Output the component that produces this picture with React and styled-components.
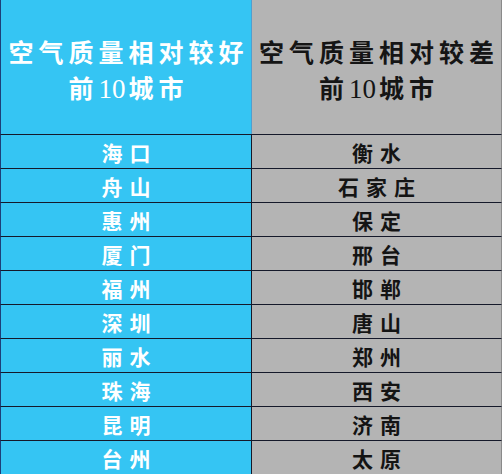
import { Fragment } from "react"
import styled, { createGlobalStyle } from "styled-components"

const GlobalStyle = createGlobalStyle`
  html, body {
    margin: 0;
    padding: 0;
    background: #ffffff;
  }
  body {
    font-family: "Noto Sans CJK SC", "Noto Sans", sans-serif;
  }
`

const Table = styled.div`
  width: 502px;
  height: 474px;
  display: grid;
  grid-template-columns: 251px 251px;
  grid-template-rows: 134px repeat(10, 34px);
  overflow: hidden;
`

const HeadCell = styled.div`
  display: flex;
  flex-direction: column;
  align-items: center;
  justify-content: center;
  padding-top: 6px;
  box-sizing: border-box;
  background-color: ${props => props.$good ? "#35c5f3" : "#b4b4b4"};
  color: ${props => props.$good ? "#ffffff" : "#151515"};
  border-left: ${props => props.$good ? "1px solid #1d3f78" : "1px solid #4f9fd0"};
  border-right: ${props => props.$good ? "none" : "1px solid #8a8a8a"};
`

const HeadLine = styled.div`
  font-size: 25px;
  font-weight: 700;
  line-height: 36px;
  letter-spacing: 5px;
  padding-left: 5px;
  white-space: nowrap;
`

const Num = styled.span`
  font-family: "Liberation Serif", "Times New Roman", serif;
  font-weight: 400;
  font-size: 27px;
  letter-spacing: 0;
  margin-right: 3px;
`

const Cell = styled.div`
  display: flex;
  align-items: center;
  justify-content: center;
  box-sizing: border-box;
  border-top: 1px solid #15192a;
  background-color: ${props => props.$good ? "#35c5f3" : "#b4b4b4"};
  color: ${props => props.$good ? "#ffffff" : "#141414"};
  border-left: ${props => props.$good ? "1px solid #1d3f78" : "1px solid #15192a"};
  border-right: ${props => props.$good ? "none" : "1px solid #8a8a8a"};
  font-size: 21px;
  font-weight: 700;
  letter-spacing: 7px;
  padding-left: 7px;
  padding-top: 1px;
`

const good = ["海口", "舟山", "惠州", "厦门", "福州", "深圳", "丽水", "珠海", "昆明", "台州"]
const bad = ["衡水", "石家庄", "保定", "邢台", "邯郸", "唐山", "郑州", "西安", "济南", "太原"]

const App = () => {
  return (
    <>
      <GlobalStyle />
      <Table>
        <HeadCell $good>
          <HeadLine>空气质量相对较好</HeadLine>
          <HeadLine>前<Num>10</Num>城市</HeadLine>
        </HeadCell>
        <HeadCell>
          <HeadLine>空气质量相对较差</HeadLine>
          <HeadLine>前<Num>10</Num>城市</HeadLine>
        </HeadCell>
        {good.map((city, i) => (
          <Fragment key={city}>
            <Cell $good>{city}</Cell>
            <Cell>{bad[i]}</Cell>
          </Fragment>
        ))}
      </Table>
    </>
  )
}

export default App
